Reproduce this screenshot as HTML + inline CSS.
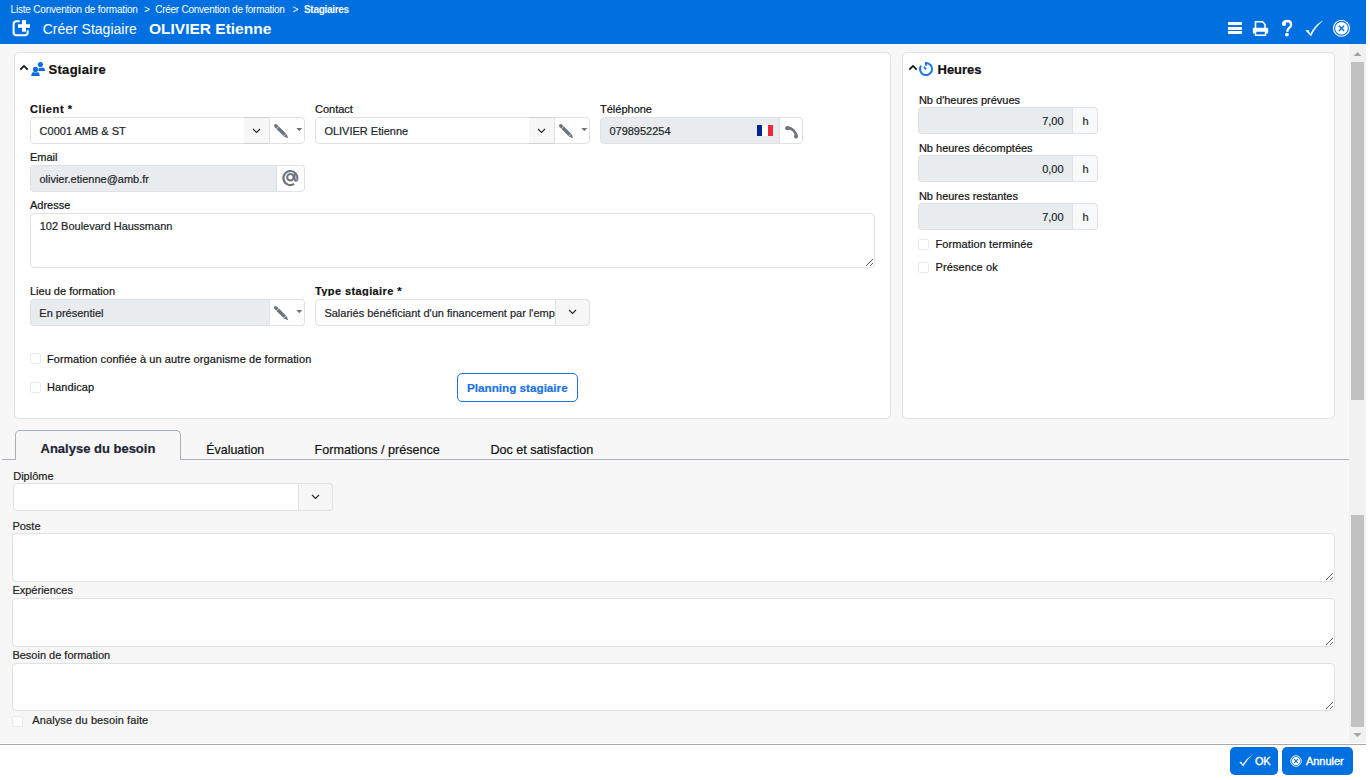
<!DOCTYPE html><html><head><meta charset="utf-8"><style>
html,body{margin:0;padding:0;}
body{width:1370px;height:780px;overflow:hidden;background:#fff;font-family:"Liberation Sans",sans-serif;position:relative;}
.a{position:absolute;box-sizing:border-box;}
.t{position:absolute;white-space:nowrap;-webkit-text-stroke:0.2px currentColor;}
textarea{position:absolute;box-sizing:border-box;border:1px solid #dee2e6;border-radius:4px;background:#fff;margin:0;padding:0;outline:none;}
</style></head><body>
<div class="a" style="left:0px;top:44px;width:1366px;height:700px;background:#f7f7f7;"></div>
<div class="a" style="left:0px;top:0px;width:1366px;height:44px;background:#0070e0;"></div>
<div class="t" style="left:10.6px;top:4.54px;font-size:10px;line-height:10px;color:#fff;letter-spacing:-0.2px;-webkit-text-stroke:0;">Liste Convention de formation</div>
<div class="t" style="left:144px;top:4.54px;font-size:10px;line-height:10px;color:#fff;-webkit-text-stroke:0;">&gt;</div>
<div class="t" style="left:155.2px;top:4.54px;font-size:10px;line-height:10px;color:#fff;letter-spacing:-0.25px;-webkit-text-stroke:0;">Créer Convention de formation</div>
<div class="t" style="left:292.4px;top:4.54px;font-size:10px;line-height:10px;color:#fff;-webkit-text-stroke:0;">&gt;</div>
<div class="t" style="left:304px;top:4.54px;font-size:10px;line-height:10px;font-weight:700;color:#fff;letter-spacing:-0.3px;-webkit-text-stroke:0;">Stagiaires</div>
<svg class="a" style="left:8px;top:16px" width="24" height="22" viewBox="0 0 24 22"><path d="M11.7 5.2 H8.6 Q5.6 5.2 5.6 8.2 V16.2 Q5.6 19.2 8.6 19.2 H16.7 Q19.7 19.2 19.7 16.2 V14.2" fill="none" stroke="#fff" stroke-width="2"/><rect x="10" y="8.2" width="12" height="3.6" fill="#fff"/><rect x="14" y="4" width="4" height="11.7" fill="#fff"/></svg>
<div class="t" style="left:42.7px;top:22.15px;font-size:14px;line-height:14px;color:#fff;-webkit-text-stroke:0;">Créer Stagiaire</div>
<div class="t" style="left:149px;top:20.88px;font-size:15.5px;line-height:15.5px;font-weight:700;color:#fff;-webkit-text-stroke:0;">OLIVIER Etienne</div>
<div class="a" style="left:1228px;top:22px;width:14px;height:3px;background:#fff;"></div>
<div class="a" style="left:1228px;top:26.7px;width:14px;height:3px;background:#fff;"></div>
<div class="a" style="left:1228px;top:31px;width:14px;height:3px;background:#fff;"></div>
<svg class="a" style="left:1252px;top:20px" width="17" height="16" viewBox="0 0 17 16"><path d="M3.5 8 V1.8 H10.5 L13 4.3 V8" fill="none" stroke="#fff" stroke-width="1.6"/><rect x="0.8" y="7.8" width="15.4" height="5.6" rx="1" fill="#fff"/><rect x="3.5" y="11" width="10" height="4.2" fill="#0070e0" stroke="#fff" stroke-width="1.5"/></svg>
<svg class="a" style="left:1280px;top:18px" width="14" height="20" viewBox="0 0 14 20"><circle cx="4" cy="5.9" r="2.15" fill="#fff"/><path d="M3.2 5.6 Q3.8 3 7.4 3 Q11.1 3.1 11.1 6.4 Q11.1 8.5 9.2 9.9 Q7.4 11.2 7.2 13.8" fill="none" stroke="#fff" stroke-width="2.3"/><circle cx="6.9" cy="16.6" r="1.9" fill="#fff"/></svg>
<svg class="a" style="left:1305px;top:19.5px" width="18" height="17" viewBox="0 0 18 17"><path d="M0.5 10.5 L3.5 10 L5.3 14 Q9 6 17.3 0.8 L17.3 1.5 Q10.5 7 6 16.3 Z" fill="#fff"/></svg>
<svg class="a" style="left:1332px;top:19px" width="19" height="19" viewBox="0 0 19 19"><circle cx="9.5" cy="9.3" r="8" fill="none" stroke="#fff" stroke-width="1.1"/><circle cx="9.5" cy="9.3" r="6.3" fill="#fff"/><path d="M6.9 6.7 L12.1 11.9 M12.1 6.7 L6.9 11.9" stroke="#0070e0" stroke-width="1.4"/></svg>
<div class="a" style="left:14px;top:52px;width:877px;height:367px;background:#fff;border:1px solid #dee2e6;border-radius:5px;"></div>
<svg class="a" style="left:19px;top:63px" width="10" height="8" viewBox="0 0 10 8"><path d="M1.3 6.6 L5 2.9 L8.7 6.6" fill="none" stroke="#111" stroke-width="1.7"/></svg>
<svg class="a" style="left:28px;top:58px" width="22" height="22" viewBox="0 0 22 22"><path d="M9.8 13.1 L10.5 10.7 Q10.9 9.7 12 9.7 H15 Q16.1 9.7 16.5 10.7 L17.2 13.1 Z" fill="#0a6be0"/><circle cx="12.4" cy="6.5" r="2.55" fill="#0a6be0" stroke="#fff" stroke-width="0.9" paint-order="stroke"/><path d="M3.1 17.9 L3.8 15.4 Q4.2 14.3 5.3 14.3 H9.7 Q10.8 14.3 11.2 15.4 L11.9 17.9 Z" fill="#0a6be0" stroke="#fff" stroke-width="0.9" paint-order="stroke"/><circle cx="7.5" cy="11.4" r="2.55" fill="#0a6be0" stroke="#fff" stroke-width="1" paint-order="stroke"/></svg>
<div class="t" style="left:48.5px;top:63.00px;font-size:13px;line-height:13px;font-weight:700;color:#111;letter-spacing:0.3px;">Stagiaire</div>
<div class="t" style="left:30px;top:103.69px;font-size:11px;line-height:11px;font-weight:700;color:#111;letter-spacing:0.6px;">Client *</div>
<div class="a" style="left:30px;top:117px;width:275px;height:27px;border:1px solid #dee2e6;border-radius:4px;background:#fff;"></div>
<div class="a" style="left:244px;top:117px;width:25px;height:27px;background:#f7f7f7;border-top:1px solid #cfd2d5;border-bottom:1px solid #cfd2d5;"></div>
<div class="a" style="left:268.5px;top:117px;width:1px;height:27px;background:#dee2e6;"></div>
<div class="t" style="left:39.6px;top:125.69px;font-size:11px;line-height:11px;color:#212529;">C0001 AMB &amp; ST</div>
<svg class="a" style="left:251.7px;top:127.69999999999999px" width="9" height="6" viewBox="0 0 9 6"><path d="M1 1L4.5 4.5L8 1" fill="none" stroke="#212529" stroke-width="1.1"/></svg>
<svg class="a" style="left:268px;top:118px" width="24" height="24" viewBox="0 0 24 24"><path d="M7.7 7.7 L17 17" stroke="#6c757d" stroke-width="3.4" stroke-linecap="round"/><path d="M18.8 16.4 L16.4 18.8 L20.2 20.2 Z" fill="#6c757d"/><path d="M8.3 10.9 L10.9 8.3" stroke="#fff" stroke-width="0.7"/><path d="M15.6 18.2 L18.2 15.6" stroke="#fff" stroke-width="0.7"/></svg>
<svg class="a" style="left:296px;top:128px" width="7" height="4" viewBox="0 0 7 4"><path d="M0.3 0H6.3L3.3 3.2Z" fill="#6c757d"/></svg>
<div class="t" style="left:315px;top:103.69px;font-size:11px;line-height:11px;color:#111;">Contact</div>
<div class="a" style="left:315px;top:117px;width:275px;height:27px;border:1px solid #dee2e6;border-radius:4px;background:#fff;"></div>
<div class="a" style="left:529px;top:117px;width:25px;height:27px;background:#f7f7f7;border-top:1px solid #cfd2d5;border-bottom:1px solid #cfd2d5;"></div>
<div class="a" style="left:553.5px;top:117px;width:1px;height:27px;background:#dee2e6;"></div>
<div class="t" style="left:324.4px;top:125.69px;font-size:11px;line-height:11px;color:#212529;">OLIVIER Etienne</div>
<svg class="a" style="left:536.7px;top:127.69999999999999px" width="9" height="6" viewBox="0 0 9 6"><path d="M1 1L4.5 4.5L8 1" fill="none" stroke="#212529" stroke-width="1.1"/></svg>
<svg class="a" style="left:553px;top:118px" width="24" height="24" viewBox="0 0 24 24"><path d="M7.7 7.7 L17 17" stroke="#6c757d" stroke-width="3.4" stroke-linecap="round"/><path d="M18.8 16.4 L16.4 18.8 L20.2 20.2 Z" fill="#6c757d"/><path d="M8.3 10.9 L10.9 8.3" stroke="#fff" stroke-width="0.7"/><path d="M15.6 18.2 L18.2 15.6" stroke="#fff" stroke-width="0.7"/></svg>
<svg class="a" style="left:581px;top:128px" width="7" height="4" viewBox="0 0 7 4"><path d="M0.3 0H6.3L3.3 3.2Z" fill="#6c757d"/></svg>
<div class="t" style="left:600px;top:103.69px;font-size:11px;line-height:11px;color:#111;">Téléphone</div>
<div class="a" style="left:600px;top:117px;width:203px;height:27px;border:1px solid #dee2e6;border-radius:4px;background:#e9ecef;"></div>
<div class="a" style="left:779px;top:117px;width:24px;height:27px;border:1px solid #dee2e6;border-radius:0 4px 4px 0;background:#fff;"></div>
<div class="t" style="left:609.4px;top:125.69px;font-size:11px;line-height:11px;color:#212529;">0798952254</div>
<div class="a" style="left:757px;top:125px;width:5px;height:11px;background:#002395;"></div>
<div class="a" style="left:762px;top:125px;width:6px;height:11px;background:#fff;"></div>
<div class="a" style="left:768px;top:125px;width:5px;height:11px;background:#ed2939;"></div>
<svg class="a" style="left:780.8px;top:119.5px" width="20" height="20" viewBox="0 0 20 20"><path d="M6 7.6 A9.6 9.6 0 0 1 15.3 16.6" fill="none" stroke="#6c757d" stroke-width="2.6"/><ellipse cx="6.4" cy="8.2" rx="2.3" ry="2.1" fill="#6c757d"/><ellipse cx="15" cy="16.2" rx="2" ry="2.2" fill="#6c757d"/></svg>
<div class="t" style="left:30px;top:151.69px;font-size:11px;line-height:11px;color:#111;">Email</div>
<div class="a" style="left:30px;top:165px;width:275px;height:27px;border:1px solid #dee2e6;border-radius:4px;background:#e9ecef;"></div>
<div class="a" style="left:276px;top:165px;width:29px;height:27px;border:1px solid #dee2e6;border-radius:0 4px 4px 0;background:#fff;"></div>
<div class="t" style="left:39.4px;top:173.69px;font-size:11px;line-height:11px;color:#212529;">olivier.etienne@amb.fr</div>
<svg class="a" style="left:280px;top:167px" width="20" height="20" viewBox="0 0 20 20"><path d="M17.2 12.6 A7 7 0 1 0 14.2 16.9" fill="none" stroke="#6c757d" stroke-width="2.1"/><circle cx="10.4" cy="10.3" r="3.2" fill="none" stroke="#6c757d" stroke-width="2"/><path d="M14.6 6.3 V11.8 Q14.6 13.8 16.1 13.8 Q17 13.8 17.3 12.4" fill="none" stroke="#6c757d" stroke-width="2"/></svg>
<div class="t" style="left:30px;top:199.69px;font-size:11px;line-height:11px;color:#111;">Adresse</div>
<textarea style="left:30px;top:213px;width:845px;height:55px;"></textarea>
<div class="t" style="left:39.7px;top:220.69px;font-size:11px;line-height:11px;color:#212529;">102 Boulevard Haussmann</div>
<div class="t" style="left:30px;top:285.69px;font-size:11px;line-height:11px;color:#111;">Lieu de formation</div>
<div class="a" style="left:30px;top:299px;width:275px;height:27px;border:1px solid #dee2e6;border-radius:4px;background:#e9ecef;"></div>
<div class="a" style="left:269px;top:299px;width:36px;height:27px;border:1px solid #dee2e6;border-radius:0 4px 4px 0;background:#fff;"></div>
<div class="t" style="left:39.3px;top:307.69px;font-size:11px;line-height:11px;color:#212529;">En présentiel</div>
<svg class="a" style="left:268px;top:300px" width="24" height="24" viewBox="0 0 24 24"><path d="M7.7 7.7 L17 17" stroke="#6c757d" stroke-width="3.4" stroke-linecap="round"/><path d="M18.8 16.4 L16.4 18.8 L20.2 20.2 Z" fill="#6c757d"/><path d="M8.3 10.9 L10.9 8.3" stroke="#fff" stroke-width="0.7"/><path d="M15.6 18.2 L18.2 15.6" stroke="#fff" stroke-width="0.7"/></svg>
<svg class="a" style="left:296px;top:310px" width="7" height="4" viewBox="0 0 7 4"><path d="M0.3 0H6.3L3.3 3.2Z" fill="#6c757d"/></svg>
<div class="a" style="left:315px;top:284px;width:120px;height:11.5px;overflow:hidden;">
<div class="t" style="left:0px;top:1.69px;font-size:11px;line-height:11px;font-weight:700;color:#111;letter-spacing:0.4px;">Type stagiaire *</div>
</div>
<div class="a" style="left:315px;top:299px;width:275px;height:27px;border:1px solid #dee2e6;border-radius:4px;background:#fff;"></div>
<div class="a" style="left:316px;top:300px;width:239px;height:25px;overflow:hidden;">
<div class="t" style="left:8.4px;top:7.69px;font-size:11px;line-height:11px;color:#212529;">Salariés bénéficiant d'un financement par l'employeur</div>
</div>
<div class="a" style="left:555px;top:299px;width:35px;height:27px;border:1px solid #dee2e6;border-radius:0 4px 4px 0;background:#f7f7f7;"></div>
<svg class="a" style="left:568.0px;top:309px" width="9" height="6" viewBox="0 0 9 6"><path d="M1 1L4.5 4.5L8 1" fill="none" stroke="#212529" stroke-width="1.1"/></svg>
<div class="a" style="left:30px;top:353px;width:11px;height:11px;border:1px solid #e9ecef;border-radius:2px;background:#fff;"></div>
<div class="t" style="left:47px;top:353.69px;font-size:11px;line-height:11px;color:#111;letter-spacing:0.1px;">Formation confiée à un autre organisme de formation</div>
<div class="a" style="left:30px;top:382px;width:11px;height:11px;border:1px solid #e9ecef;border-radius:2px;background:#fff;"></div>
<div class="t" style="left:47px;top:381.69px;font-size:11px;line-height:11px;color:#111;letter-spacing:0.1px;">Handicap</div>
<div class="a" style="left:457px;top:373px;width:121px;height:29px;border:1px solid #1a73e8;border-radius:5px;background:#fff;"></div>
<div class="t" style="left:467px;top:382.10px;font-size:11.7px;line-height:11.7px;font-weight:700;color:#1a73e8;">Planning stagiaire</div>
<div class="a" style="left:902px;top:52px;width:433px;height:367px;background:#fff;border:1px solid #dee2e6;border-radius:5px;"></div>
<svg class="a" style="left:908px;top:63px" width="10" height="8" viewBox="0 0 10 8"><path d="M1.3 6.6 L5 2.9 L8.7 6.6" fill="none" stroke="#111" stroke-width="1.7"/></svg>
<svg class="a" style="left:918px;top:61px" width="16" height="16" viewBox="0 0 16 16"><path d="M8 1.95 A6.05 6.05 0 1 1 3.01 4.58" fill="none" stroke="#1a73e8" stroke-width="2"/><rect x="7" y="1" width="2" height="3.6" fill="#1a73e8"/><path d="M5.9 5.9 L8.3 8.4" stroke="#1a73e8" stroke-width="1.6"/></svg>
<div class="t" style="left:937.5px;top:63.00px;font-size:13px;line-height:13px;font-weight:700;color:#111;">Heures</div>
<div class="t" style="left:918.9px;top:94.69px;font-size:11px;line-height:11px;color:#111;">Nb d'heures prévues</div>
<div class="a" style="left:918px;top:107px;width:180px;height:27px;border:1px solid #dee2e6;border-radius:4px;background:#e9ecef;"></div>
<div class="a" style="left:1072px;top:107px;width:26px;height:27px;border:1px solid #dee2e6;border-radius:0 4px 4px 0;background:#f8f9fa;"></div>
<div class="t" style="right:306.4000000000001px;top:115.69px;font-size:11px;line-height:11px;color:#212529;">7,00</div>
<div class="t" style="left:1082.4px;top:115.69px;font-size:11px;line-height:11px;color:#212529;">h</div>
<div class="t" style="left:918.9px;top:142.69px;font-size:11px;line-height:11px;color:#111;">Nb heures décomptées</div>
<div class="a" style="left:918px;top:155px;width:180px;height:27px;border:1px solid #dee2e6;border-radius:4px;background:#e9ecef;"></div>
<div class="a" style="left:1072px;top:155px;width:26px;height:27px;border:1px solid #dee2e6;border-radius:0 4px 4px 0;background:#f8f9fa;"></div>
<div class="t" style="right:306.4000000000001px;top:163.69px;font-size:11px;line-height:11px;color:#212529;">0,00</div>
<div class="t" style="left:1082.4px;top:163.69px;font-size:11px;line-height:11px;color:#212529;">h</div>
<div class="t" style="left:918.9px;top:190.69px;font-size:11px;line-height:11px;color:#111;">Nb heures restantes</div>
<div class="a" style="left:918px;top:203px;width:180px;height:27px;border:1px solid #dee2e6;border-radius:4px;background:#e9ecef;"></div>
<div class="a" style="left:1072px;top:203px;width:26px;height:27px;border:1px solid #dee2e6;border-radius:0 4px 4px 0;background:#f8f9fa;"></div>
<div class="t" style="right:306.4000000000001px;top:211.69px;font-size:11px;line-height:11px;color:#212529;">7,00</div>
<div class="t" style="left:1082.4px;top:211.69px;font-size:11px;line-height:11px;color:#212529;">h</div>
<div class="a" style="left:918px;top:239px;width:11px;height:11px;border:1px solid #e9ecef;border-radius:2px;background:#fff;"></div>
<div class="t" style="left:935.5px;top:238.69px;font-size:11px;line-height:11px;color:#111;letter-spacing:0.1px;">Formation terminée</div>
<div class="a" style="left:918px;top:262px;width:11px;height:11px;border:1px solid #e9ecef;border-radius:2px;background:#fff;"></div>
<div class="t" style="left:935.5px;top:261.69px;font-size:11px;line-height:11px;color:#111;letter-spacing:0.1px;">Présence ok</div>
<div class="a" style="left:2px;top:459px;width:1347px;height:1px;background:#a9b0bb;"></div>
<div class="a" style="left:15px;top:430px;width:166px;height:30px;border:1px solid #a9b0bb;border-bottom:none;border-radius:5px 5px 0 0;background:#f7f7f7;"></div>
<div class="t" style="left:40.5px;top:442.00px;font-size:13px;line-height:13px;font-weight:700;color:#1f2633;">Analyse du besoin</div>
<div class="t" style="left:206.3px;top:443.50px;font-size:12.4px;line-height:12.4px;color:#111;">Évaluation</div>
<div class="t" style="left:314.5px;top:444.33px;font-size:12.6px;line-height:12.6px;color:#111;">Formations / présence</div>
<div class="t" style="left:490.4px;top:444.33px;font-size:12.6px;line-height:12.6px;color:#111;">Doc et satisfaction</div>
<div class="t" style="left:13.2px;top:470.69px;font-size:11px;line-height:11px;color:#222;">Diplôme</div>
<div class="a" style="left:13px;top:483px;width:320px;height:28px;border:1px solid #dee2e6;border-radius:4px;background:#fff;"></div>
<div class="a" style="left:298px;top:483px;width:35px;height:28px;border:1px solid #dee2e6;border-radius:0 4px 4px 0;background:#f7f7f7;"></div>
<svg class="a" style="left:310.7px;top:493.8px" width="9" height="6" viewBox="0 0 9 6"><path d="M1 1L4.5 4.5L8 1" fill="none" stroke="#212529" stroke-width="1.1"/></svg>
<div class="t" style="left:12.4px;top:520.69px;font-size:11px;line-height:11px;color:#222;">Poste</div>
<textarea style="left:12px;top:533px;width:1323px;height:49px;"></textarea>
<div class="t" style="left:12.4px;top:584.69px;font-size:11px;line-height:11px;color:#222;">Expériences</div>
<textarea style="left:12px;top:598px;width:1323px;height:49px;"></textarea>
<div class="t" style="left:12.4px;top:649.69px;font-size:11px;line-height:11px;color:#222;">Besoin de formation</div>
<textarea style="left:12px;top:663px;width:1323px;height:48px;"></textarea>
<div class="a" style="left:12px;top:715.5px;width:11px;height:11px;border:1px solid #e9ecef;border-radius:2px;background:#fff;"></div>
<div class="t" style="left:32.3px;top:714.69px;font-size:11px;line-height:11px;color:#222;letter-spacing:0.1px;">Analyse du besoin faite</div>
<div class="a" style="left:1349px;top:44px;width:17px;height:700px;background:#f1f1f1;"></div>
<svg class="a" style="left:1353px;top:51px" width="9" height="6" viewBox="0 0 9 6"><path d="M0.5 5H8.5L4.5 1Z" fill="#a3a3a3"/></svg>
<div class="a" style="left:1351px;top:62px;width:13px;height:338px;background:#c1c1c1;"></div>
<div class="a" style="left:1351px;top:515px;width:13px;height:212px;background:#c1c1c1;"></div>
<svg class="a" style="left:1353px;top:732px" width="9" height="6" viewBox="0 0 9 6"><path d="M0.5 1H8.5L4.5 5Z" fill="#a3a3a3"/></svg>
<div class="a" style="left:0px;top:743px;width:1366px;height:1px;background:#fff;"></div>
<div class="a" style="left:0px;top:744px;width:1366px;height:1px;background:#a8a8a8;"></div>
<div class="a" style="left:1230px;top:747px;width:48px;height:28px;background:#0070e0;border-radius:5px;"></div>
<svg class="a" style="left:1239px;top:755px" width="13" height="12" viewBox="0 0 13 12"><path d="M0.3 7 L2.4 6.8 L3.8 9.6 Q6.5 4.2 12.6 0.2 L12.6 0.8 Q7.8 4.8 4.3 11.6 Z" fill="#fff"/></svg>
<div class="t" style="left:1255px;top:755.69px;font-size:11px;line-height:11px;color:#fff;letter-spacing:-0.2px;-webkit-text-stroke:0.35px #fff;">OK</div>
<div class="a" style="left:1282px;top:747px;width:71px;height:28px;background:#0070e0;border-radius:5px;"></div>
<svg class="a" style="left:1290px;top:755px" width="12" height="12" viewBox="0 0 12 12"><circle cx="6" cy="6" r="5.3" fill="none" stroke="#fff" stroke-width="0.9"/><circle cx="6" cy="6" r="4" fill="#fff"/><path d="M4.2 4.2 L7.8 7.8 M7.8 4.2 L4.2 7.8" stroke="#0070e0" stroke-width="1.1"/></svg>
<div class="t" style="left:1306px;top:755.69px;font-size:11px;line-height:11px;color:#fff;letter-spacing:-0.05px;-webkit-text-stroke:0.35px #fff;">Annuler</div>
</body></html>
